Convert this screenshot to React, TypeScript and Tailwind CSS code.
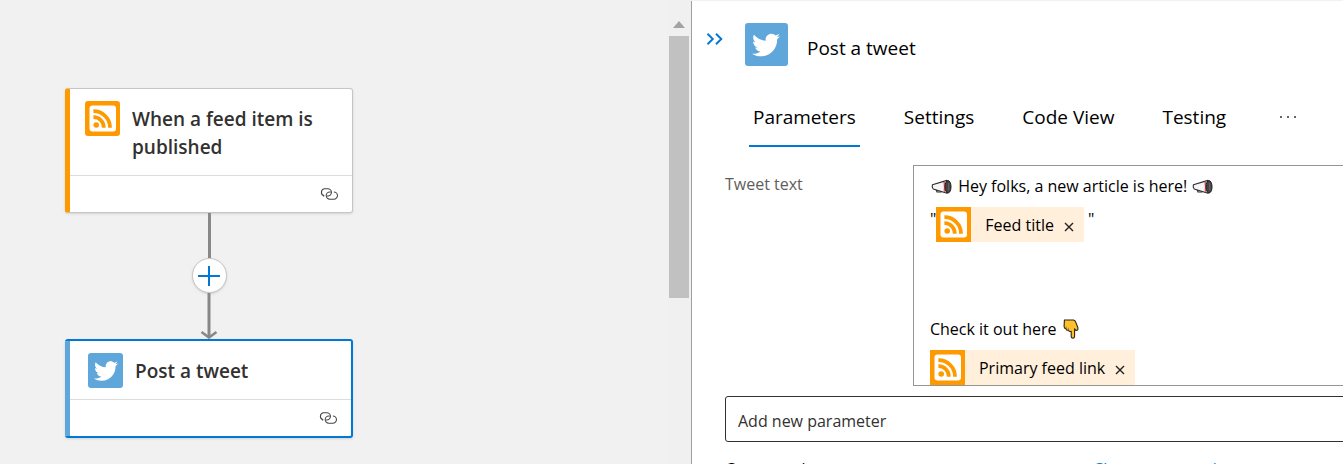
import React from "react";
import { FaTwitter } from "react-icons/fa";

function RssIcon({ className = "" }: { className?: string }) {
  return (
    <svg viewBox="0 0 35 35" className={"block shrink-0 " + className} aria-hidden="true">
      <rect width="35" height="35" fill="#ff9900" />
      <rect x="4.5" y="4.5" width="26.5" height="26" rx="3" fill="#fff" />
      <circle cx="11.2" cy="24" r="2.8" fill="#ff9900" />
      <path d="M8.4 16.2A10.2 10.2 0 0 1 18.8 26.8" fill="none" stroke="#ff9900" strokeWidth="3.8" />
      <path d="M8.4 10.2A16.4 16.4 0 0 1 25 26.8" fill="none" stroke="#ff9900" strokeWidth="3.8" />
    </svg>
  );
}

function LinkIcon() {
  return (
    <svg viewBox="0 0 18 12" className="block h-3 w-[18px]" fill="none" stroke="#484644" strokeWidth="1.1" strokeLinecap="round" aria-hidden="true">
      <path d="M3.4 7.9H4.2A3.7 3.7 0 0 1 4.3 0.7H7.8A3.65 3.65 0 0 1 7.8 8H7.2" />
      <path d="M14.4 4H13.9A3.6 3.6 0 0 1 13.8 11.2H9.8A3.6 3.6 0 0 1 9.8 4H10.4" />
    </svg>
  );
}

function Megaphone() {
  return (
    <svg viewBox="0 0 22 16" className="mr-0.5 inline-block h-4 w-[22px] align-[-3px]" role="img" aria-label="megaphone">
      <path d="M6 10.2 7 13H11L11.6 11.4" fill="none" stroke="#2a2a2a" strokeWidth="1.2" />
      <path d="M2.4 5.8 17 1.4V14.2L3.2 10Q1.6 8 2.4 5.8Z" fill="#f5f5f5" stroke="#2a2a2a" strokeWidth="1.1" strokeLinejoin="round" />
      <path d="M13.4 3 15 2.5V13L13.6 12.6Q14.2 7.6 13.4 3Z" fill="#e8505f" />
      <ellipse cx="18" cy="7.8" rx="3" ry="6.2" fill="#444" stroke="#1c1c1c" />
      <path d="M18.8 4V11.4" fill="none" stroke="#777" strokeWidth="0.8" />
    </svg>
  );
}

function PointDown() {
  return (
    <svg viewBox="0 0 16 20" className="ml-0.5 inline-block h-5 w-4 align-[-4px]" role="img" aria-label="pointing down">
      <path
        d="M1.4 1H10.6Q12.6 1.6 13.3 4.6L14.9 8.8Q15.3 11.2 13.4 11.4 12.2 11.4 11.6 9.8V17.4Q11.4 19.2 9.9 19.2 8.4 19.2 8.2 17.4V12.2Q5.8 13 5.4 11.2 3.2 11.6 3 9.6 1.1 9.4 1.1 7.4Z"
        fill="#ffc02d" stroke="#2b2414" strokeWidth="1.1" strokeLinejoin="round"
      />
      <path d="M3.2 9.2V8M5.6 11V9.2" stroke="#8a6a1c" strokeWidth="0.8" strokeLinecap="round" />
    </svg>
  );
}

function TwitterTile({ large = false }: { large?: boolean }) {
  return (
    <span className={"flex shrink-0 items-center justify-center rounded-[3px] bg-[#5fa7db] text-white " + (large ? "size-[43px]" : "size-[35px]")}>
      <FaTwitter className={large ? "size-7" : "size-6"} aria-hidden="true" />
    </span>
  );
}

function Token({ label }: { label: string }) {
  return (
    <span contentEditable={false} className="inline-flex h-[35px] items-center bg-[#ffefdb] align-middle">
      <RssIcon className="size-[35px]" />
      <span className="pl-3.5">{label}</span>
      <button type="button" aria-label={"Remove " + label} className="flex h-full items-center justify-center px-2.5 pt-1">
        <svg viewBox="0 0 10 10" className="size-2.5" stroke="#222" strokeWidth="1.4" aria-hidden="true">
          <path d="M1 1 9 9M9 1 1 9" />
        </svg>
      </button>
    </span>
  );
}

function Canvas() {
  return (
    <section aria-label="Workflow" className="flex min-w-0 flex-1 flex-col items-start pt-[88px] pl-[65px]">
      <div className="flex w-72 flex-col items-center">
        <article className="w-full rounded-[3px] border border-l-[5px] border-[#c8c6c4] border-l-[#ff9900] bg-white shadow-sm">
          <div className="flex items-start gap-3 border-b border-[#dcdcdc] px-[15px] pt-3 pb-3.5">
            <RssIcon className="size-[35px] rounded-[3px]" />
            <h2 className="pt-1 text-[19px]/7 font-semibold text-[#323130]">When a feed item is published</h2>
          </div>
          <div className="flex h-9 items-center justify-end pr-3.5">
            <LinkIcon />
          </div>
        </article>
        <div className="h-[45px] w-[3px] bg-[#8a8886]" />
        <button type="button" aria-label="Insert a new step" className="flex size-[35px] items-center justify-center rounded-full border border-[#c8c6c4] bg-white shadow-sm">
          <svg viewBox="0 0 22 22" className="size-[22px]" stroke="#0078d4" strokeWidth="2" aria-hidden="true">
            <path d="M11 1V21M0 11H22" />
          </svg>
        </button>
        <svg viewBox="0 0 18 46" className="block h-[46px] w-[18px]" fill="none" stroke="#8a8886" strokeWidth="3" aria-hidden="true">
          <path d="M9 0V44" />
          <path d="M1.5 39 9 44.5 16.5 39" strokeWidth="2.6" />
        </svg>
        <article className="flex w-full overflow-hidden rounded-[3px] border-2 border-l-0 border-[#0078d4] bg-white shadow-sm">
          <div className="w-[5px] bg-[#5fa7db]" />
          <div className="flex-1">
            <div className="flex items-center gap-3 border-b border-[#dcdcdc] px-[18px] pt-3 pb-[11px]">
              <TwitterTile />
              <h2 className="text-[19px]/7 font-semibold text-[#323130]">Post a tweet</h2>
            </div>
            <div className="flex h-9 items-center justify-end pr-3.5">
              <LinkIcon />
            </div>
          </div>
        </article>
      </div>
    </section>
  );
}

const tabs = ["Parameters", "Settings", "Code View", "Testing"];

export default function App() {
  return (
    <div className="flex h-screen overflow-hidden bg-[#f1f1f1] font-['Open_Sans','Noto_Sans',sans-serif]">
      <div className="flex w-[51.45%] shrink-0">
        <Canvas />
        <div className="flex w-6 flex-col items-center bg-[#f0f0f0] pt-[21px]" aria-hidden="true">
          <svg viewBox="0 0 12 7" className="h-[7px] w-3" fill="#a3a3a3">
            <path d="M6 0 12 7H0Z" />
          </svg>
          <div className="mt-2 h-[262px] w-5 bg-[#c1c1c1]" />
        </div>
      </div>
      <main className="mt-px min-w-0 flex-1 border-l border-[#a19f9d] bg-white text-black">
        <header className="flex items-start pt-[22px] pl-3.5">
          <button type="button" aria-label="Collapse panel" className="mt-2.5 flex h-3 w-[18px] items-center">
            <svg viewBox="0 0 18 12" className="h-3 w-[18px]" fill="none" stroke="#0078d4" strokeWidth="1.9" aria-hidden="true">
              <path d="M1.5 0.8 6.8 6 1.5 11.2M10 0.8 15.3 6 10 11.2" />
            </svg>
          </button>
          <div className="flex items-center pl-[21px]">
            <TwitterTile large />
            <h1 className="pt-1.5 pl-[19px] text-[19px]/7">Post a tweet</h1>
          </div>
        </header>
        <div role="tablist" className="mt-[37px] ml-[57px] flex items-start gap-10 text-[19px]/7">
          {tabs.map((t, i) => (
            <button
              key={t}
              type="button"
              role="tab"
              aria-selected={i === 0}
              className={"h-11 shrink-0 border-b-2 px-1 pb-3.5 whitespace-nowrap " + (i === 0 ? "border-[#0078d4]" : "border-transparent")}
            >
              {t}
            </button>
          ))}
          <button type="button" aria-label="More tabs" className="ml-2.5 flex h-7 items-center">
            <svg viewBox="0 0 16 2" className="h-0.5 w-4" fill="#333" aria-hidden="true">
              <circle cx="1" cy="1" r="1" />
              <circle cx="8" cy="1" r="1" />
              <circle cx="15" cy="1" r="1" />
            </svg>
          </button>
        </div>
        <div className="mt-[18px] ml-[33px] text-base/6">
          <div className="flex items-start">
            <span id="tweet-text" className="w-[188px] shrink-0 pt-[7px] text-[#605e5c]">Tweet text</span>
            <div
              role="textbox"
              aria-multiline="true"
              aria-labelledby="tweet-text"
              contentEditable
              suppressContentEditableWarning
              className="-mr-1 flex-1 border border-[#979593] pt-2 pl-4 whitespace-nowrap outline-none"
            >
              <p className="h-[33px]"><Megaphone /> Hey folks, a new article is here! <Megaphone /></p>
              <p className="flex h-[110px] items-start">
                <span>"</span>
                <Token label="Feed title" />
                <span className="pl-1">"</span>
              </p>
              <p className="h-[33px]">Check it out here <PointDown /></p>
              <p className="flex"><Token label="Primary feed link" /></p>
            </div>
          </div>
          <select aria-label="Add new parameter" className="mt-2.5 -mr-1 block h-[46px] w-[calc(100%+4px)] appearance-none rounded-[3px] border border-[#323130] bg-white px-3 pt-1 text-[#323130]">
            <option>Add new parameter</option>
          </select>
          <p className="mt-[15px] whitespace-nowrap">
            Connected to <a href="#connection" className="ml-66 text-[#0078d4]">Change connection</a>
          </p>
        </div>
      </main>
    </div>
  );
}
